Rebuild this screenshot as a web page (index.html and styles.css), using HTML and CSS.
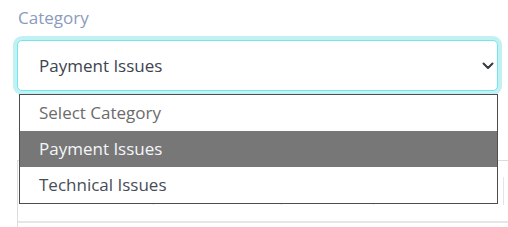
FILE: index.html
```html
<!DOCTYPE html>
<html lang="en">
<head>
  <meta charset="UTF-8" />
  <meta name="viewport" content="width=device-width, initial-scale=1.0"/>
  <title>Category Select</title>
  <link rel="stylesheet" href="styles.css">
</head>
<body>

  <!-- Category field -->
  <div class="form-group">
    <label class="field-label">Category</label>

    <div class="select-wrap">
      <div class="select-box">
        <span class="select-value">Payment Issues</span>
        <svg class="chevron" width="12" height="8" viewBox="0 0 12 8">
          <path d="M1.5 1.5 L6 6 L10.5 1.5" fill="none" stroke="#343a40" stroke-width="2" stroke-linecap="round" stroke-linejoin="round"/>
        </svg>
      </div>

      <!-- Open dropdown list -->
      <ul class="option-list">
        <li class="option placeholder">Select Category</li>
        <li class="option active">Payment Issues</li>
        <li class="option">Technical Issues</li>
      </ul>
    </div>

    <!-- Card behind the dropdown -->
    <div class="card">
      <div class="card-cols">
        <div class="col col-1"></div>
        <div class="col col-2"></div>
        <div class="col col-3"></div>
        <div class="col col-4"></div>
      </div>
      <div class="card-rule"></div>
    </div>
  </div>

</body>
</html>
```

FILE: styles.css
```css
/* Global Styles */
* {
  margin: 0;
  padding: 0;
  box-sizing: border-box;
}

body {
  font-family: 'Open Sans', 'Noto Sans', sans-serif;
  background: #fff;
  width: 508px;
  height: 227px;
  overflow: hidden;
}

/* Field */
.form-group {
  padding: 6px 0 0 17px;
}

.field-label {
  display: block;
  height: 24px;
  margin-left: 1px;
  margin-bottom: 10px;
  font-size: 17px;
  line-height: 24px;
  color: #8a9bbd;
}

.select-wrap {
  position: relative;
  width: 481px;
}

.select-box {
  height: 51px;
  display: flex;
  align-items: center;
  justify-content: space-between;
  padding: 0 3px 0 21px;
  border: 1px solid #72e6ec;
  border-radius: 5px;
  box-shadow: 0 0 0 4px #c2f1f3;
  background: #fff;
}

.select-value {
  font-size: 17px;
  color: #3d4450;
}

.chevron {
  display: block;
}

/* Dropdown list */
.option-list {
  position: absolute;
  top: calc(100% + 3px);
  left: 2px;
  right: 0;
  list-style: none;
  background: #fff;
  border: 1px solid #4d4d4d;
  z-index: 10;
}

.option {
  height: 36px;
  line-height: 36px;
  padding-left: 19px;
  font-size: 17px;
  color: #474d57;
}

.option.placeholder {
  color: #6b6b6b;
}

.option.active {
  background: #777777;
  color: #f4f6fa;
}

/* Card behind */
.card {
  margin-top: 69px;
  width: 491px;
  height: 67px;
  border-top: 1px solid #dcdcdc;
  border-left: 1px solid #dcdcdc;
  padding-top: 16px;
}

.card-cols {
  display: flex;
  height: 28px;
}

.col {
  border-right: 1px solid #e4e4e4;
}

.col-1 { width: 136px; }
.col-2 { width: 128px; }
.col-3 { width: 92px; }
.col-4 { width: 130px; }

.card-rule {
  margin-top: 16px;
  border-top: 2px solid #e6e6e6;
}
```
